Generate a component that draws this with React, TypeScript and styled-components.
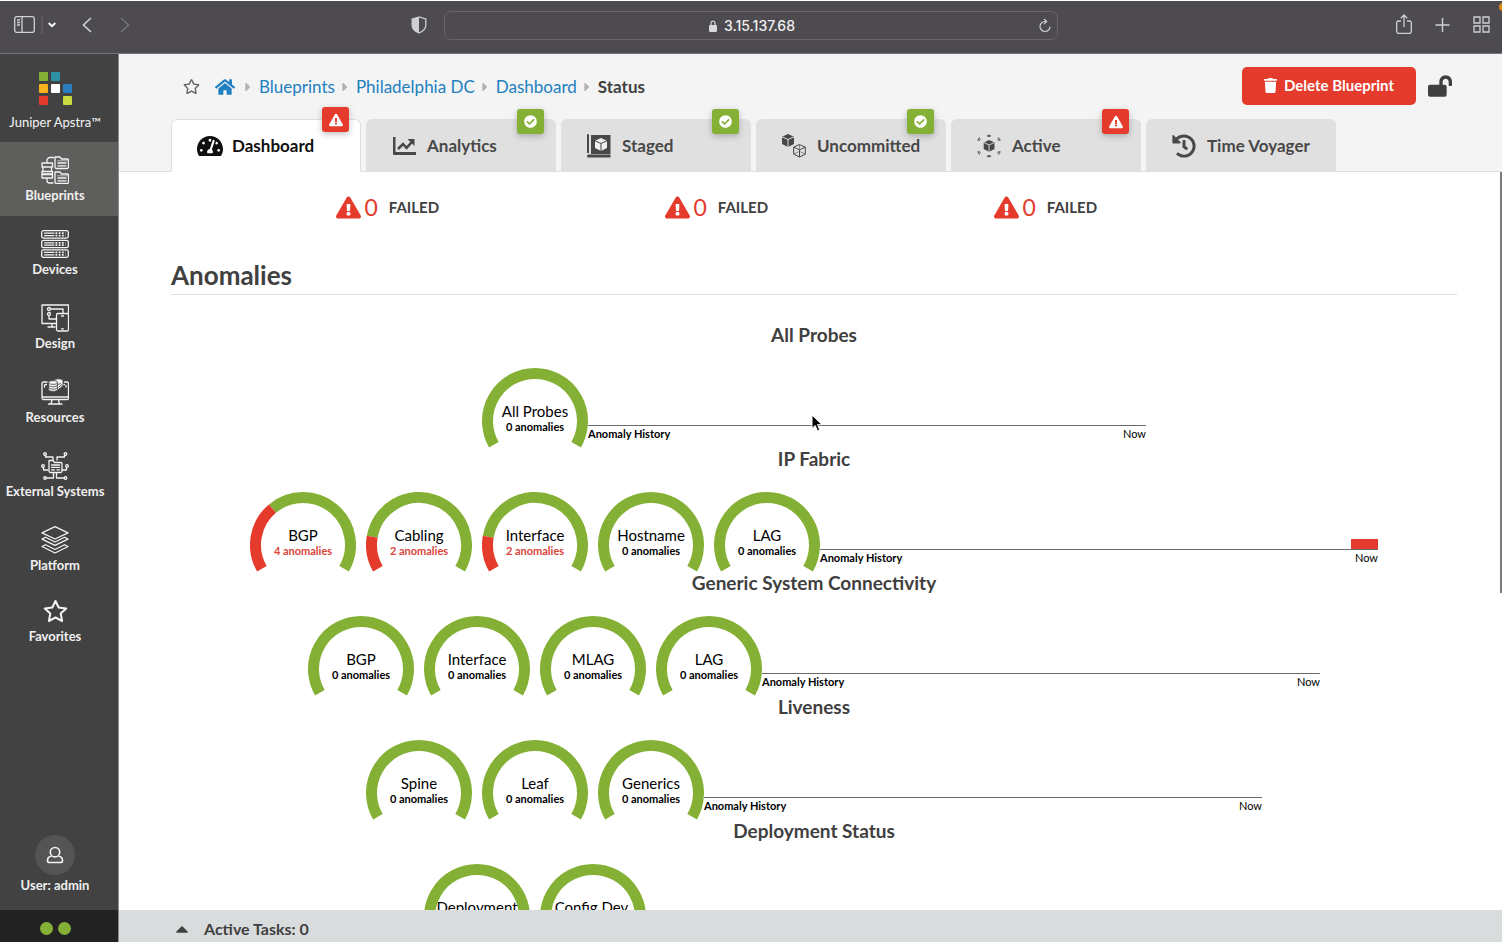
import React from 'react';
import styled, { createGlobalStyle } from 'styled-components';
import {
  FaCaretRight,
  FaCaretUp,
  FaCheckCircle,
  FaExclamationTriangle,
  FaHistory,
  FaHome,
  FaLockOpen,
  FaRegStar,
  FaTachometerAlt,
  FaTrash,
} from 'react-icons/fa';

const GREEN = '#84b135';
const RED = '#e53b2c';

const GlobalStyle = createGlobalStyle`
  * { box-sizing: border-box; }
  body {
    margin: 0;
    font-family: Lato, "Liberation Sans", sans-serif;
    color: #404040;
    background: #fff;
  }
  h1, h2, h3, ul, ol, p { margin: 0; padding: 0; }
  ul, ol { list-style: none; }
  a { text-decoration: none; }
  button, input { font-family: inherit; }
  svg { display: block; flex: none; }
`;

const Window = styled.div`
  display: flex;
  flex-direction: column;
  height: 100vh;
  overflow: hidden;
`;

/* ---------- browser toolbar ---------- */

const Toolbar = styled.header`
  position: relative;
  flex: none;
  display: grid;
  grid-template-columns: 1fr 614px 1fr;
  align-items: center;
  height: 54px;
  padding-bottom: 3px;
  background: #4d4b50;
  border-top: 1px solid #fff;
  border-bottom: 1px solid #767578;
  overflow: hidden;
`;

const ToolGroup = styled.div`
  display: flex;
  align-items: center;
  padding-bottom: 2px;
`;

const LeftTools = styled(ToolGroup)`
  padding-left: 14px;
  padding-right: 17px;
`;

const RightTools = styled(ToolGroup)`
  justify-content: flex-end;
  gap: 23px;
  padding-right: 12px;
`;

const ToolButton = styled.button<{ $push?: number }>`
  display: flex;
  padding: 0;
  margin-left: ${(p) => p.$push ?? 0}px;
  border: 0;
  background: none;
  color: #d0cfd3;
  &:disabled { color: #737176; }
`;

const Divider = styled.span`
  width: 2px;
  height: 19px;
  margin-left: 6px;
  background: #5b595e;
`;

const ShieldButton = styled(ToolButton)`
  margin-left: auto;
`;

const AddressBar = styled.div`
  display: flex;
  align-items: center;
  height: 29px;
  padding: 0 6px 0 20px;
  border: 1px solid #67656a;
  border-radius: 7px;
`;

const Address = styled.span`
  flex: 1;
  display: flex;
  align-items: center;
  justify-content: center;
  gap: 7px;
  font: 500 14px/20px Inter, sans-serif;
  color: #f0eff1;
`;

const RecordingDot = styled.span`
  position: absolute;
  top: 2px;
  right: -5px;
  width: 8px;
  height: 8px;
  border-radius: 50%;
  background: #d98a1c;
`;

/* ---------- sidebar ---------- */

const Shell = styled.div`
  flex: 1;
  min-height: 0;
  display: flex;
`;

const Sidebar = styled.aside`
  flex: none;
  width: 119px;
  display: flex;
  flex-direction: column;
  background: #424242;
  border-right: 1px solid #8c8c8c;
`;

const Brand = styled.a`
  height: 88px;
  padding-top: 18px;
  padding-right: 8px;
  display: flex;
  flex-direction: column;
  align-items: center;
  gap: 8px;
  font-size: 13px;
  line-height: 18px;
  color: #f4f4f4;
  white-space: nowrap;
`;

const NavLink = styled.a<{ $active?: boolean }>`
  display: flex;
  flex-direction: column;
  align-items: center;
  gap: 2px;
  height: 74px;
  padding: 14px 8px 0 0;
  font-size: 13px;
  font-weight: 700;
  line-height: 18px;
  color: #f0f0f0;
  white-space: nowrap;
  background: ${(p) => (p.$active ? '#5e5e5c' : 'transparent')};
`;

const UserLink = styled.a`
  display: flex;
  flex-direction: column;
  align-items: center;
  gap: 1px;
  margin-top: auto;
  padding: 0 8px 16px 0;
  font-size: 13px;
  font-weight: 700;
  line-height: 18px;
  color: #f0f0f0;
`;

const Avatar = styled.span`
  display: grid;
  place-items: center;
  width: 40px;
  height: 40px;
  border-radius: 50%;
  background: #545454;
`;

const StatusLights = styled.div`
  display: flex;
  align-items: center;
  justify-content: center;
  gap: 5px;
  height: 32px;
  padding: 5px 8px 0 0;
  background: #222;
`;

const Light = styled.span`
  width: 13px;
  height: 13px;
  border-radius: 50%;
  background: ${GREEN};
`;

/* ---------- page header ---------- */

const Page = styled.div`
  flex: 1;
  min-width: 0;
  display: flex;
  flex-direction: column;
`;

const PageHeader = styled.div`
  flex: none;
  padding: 13px 45px 0 52px;
  background: #f4f4f4;
  border-bottom: 1px solid #dededf;
`;

const TitleRow = styled.div`
  display: flex;
  align-items: center;
  height: 38px;
  padding-left: 12px;
`;

const Crumbs = styled.ol`
  display: flex;
  align-items: center;
  padding-top: 2px;
  font-size: 17px;
  line-height: 24px;
`;

const Crumb = styled.li`
  display: flex;
  align-items: center;
  a { color: #2180c0; }
  strong { font-weight: 700; }
  &:first-child { padding-right: 3px; }
`;

const StarButton = styled.button`
  display: flex;
  padding: 0;
  margin-right: 15px;
  border: 0;
  background: none;
  color: #666;
`;

const CrumbCaret = styled(FaCaretRight)`
  margin: 0 4px 0 3px;
  color: #b0b0b0;
`;

const DeleteButton = styled.button`
  display: flex;
  align-items: center;
  gap: 6px;
  height: 38px;
  margin-left: auto;
  padding: 0 22px 2px 21px;
  border: 0;
  border-radius: 5px;
  background: ${RED};
  color: #fff;
  font-size: 15px;
  font-weight: 700;
`;

const LockButton = styled.button`
  display: flex;
  padding: 0;
  margin: 0 5px 0 12px;
  border: 0;
  background: none;
  color: #404040;
`;

const Tabs = styled.nav`
  display: flex;
  gap: 5px;
  margin: 14px 0 -1px;
`;

const Tab = styled.a<{ $active?: boolean }>`
  position: relative;
  display: flex;
  align-items: center;
  gap: 10px;
  width: 190px;
  height: 53px;
  padding: 1px 0 0 25px;
  border: 1px solid ${(p) => (p.$active ? '#dededf' : '#e0e0e0')};
  border-bottom-color: ${(p) => (p.$active ? '#fff' : '#dededf')};
  border-radius: 6px 6px 0 0;
  background: ${(p) => (p.$active ? '#fff' : '#e0e0e0')};
  color: ${(p) => (p.$active ? '#101010' : '#484848')};
  font-size: 17px;
  font-weight: 700;
  line-height: 24px;
`;

const TabIcon = styled.span`
  width: 25px;
`;

const Badge = styled.span<{ $bad?: boolean; $raised?: boolean }>`
  position: absolute;
  top: ${(p) => (p.$raised ? -13 : -11)}px;
  right: 11px;
  display: grid;
  place-items: center;
  width: 27px;
  height: 25px;
  border-radius: 3px;
  background: ${(p) => (p.$bad ? RED : GREEN)};
  color: #fff;
  box-shadow: 0 2px 6px rgba(0, 0, 0, 0.25);
`;

/* ---------- content ---------- */

const Content = styled.main`
  position: relative;
  flex: 1;
  min-height: 0;
  overflow: hidden;
  padding: 19px 45px 0 52px;
`;

const ScrollThumb = styled.span`
  position: absolute;
  top: 0;
  right: 0;
  width: 2px;
  height: 57%;
  background: #7d7d7d;
`;

const StatRow = styled.ul`
  display: flex;
  justify-content: center;
  margin: 0 -15px;
`;

const Stat = styled.li`
  flex: 0 0 25%;
  display: flex;
  align-items: center;
  padding: 0 15px;
  height: 32px;
  font-size: 15px;
  font-weight: 700;
  svg, b { color: ${RED}; }
  b {
    margin: 0 11px 0 4px;
    font-size: 23px;
    font-weight: 400;
  }
`;

const SectionTitle = styled.h2`
  margin-top: 36px;
  padding-bottom: 3px;
  border-bottom: 1px solid #dedede;
  font-size: 26px;
  line-height: 32px;
`;

const Groups = styled.div`
  padding-top: 28px;
`;

const Group = styled.section`
  display: flex;
  flex-direction: column;
  align-items: center;
  height: 124px;
`;

const GroupTitle = styled.h3`
  margin-bottom: 21px;
  font-size: 19px;
  line-height: 24px;
`;

const GaugeRow = styled.div`
  display: flex;
`;

const GaugeBox = styled.div`
  position: relative;
  width: 106px;
  height: 80px;
  & + & { margin-left: 10px; }
`;

const GaugeLabel = styled.div<{ $bad?: boolean }>`
  position: absolute;
  inset: 34px 0 auto;
  text-align: center;
  font-size: 15px;
  line-height: 18px;
  color: #000;
  white-space: nowrap;
  strong {
    display: block;
    font-size: 11px;
    line-height: 14px;
    color: ${(p) => (p.$bad ? '#d9453a' : '#000')};
  }
`;

const History = styled.div`
  width: 558px;
  padding-top: 47px;
  font-size: 11px;
  line-height: 16px;
  color: #000;
`;

const HistoryPlot = styled.div`
  display: flex;
  justify-content: flex-end;
  align-items: flex-end;
  height: 11px;
  border-bottom: 1px solid #6a6a6a;
`;

const HistoryBar = styled.span`
  width: 27px;
  height: 10px;
  background: ${RED};
`;

const HistoryAxis = styled.div`
  display: flex;
  justify-content: space-between;
`;

const Pointer = styled.svg`
  position: absolute;
  top: 242px;
  left: 50%;
`;

const TaskBar = styled.footer`
  flex: none;
  display: flex;
  align-items: center;
  gap: 12px;
  height: 32px;
  padding: 5px 0 0 53px;
  background: #d9dcdd;
  font-size: 16px;
  font-weight: 700;
  line-height: 22px;
`;

/* ---------- drawings ---------- */

const LineIcon = ({ children, width = 1.3 }: { children: React.ReactNode; width?: number }) => (
  <svg width="28" height="28" viewBox="0 0 28 28" fill="none" stroke="#f4f4f4"
    strokeWidth={width} strokeLinejoin="round" strokeLinecap="round" aria-hidden="true">
    {children}
  </svg>
);

const BlueprintsIcon = () => (
  <LineIcon>
    <path d="M1 7h10.500v4H1zM2 11h8.500v4.500H2zM1 15.500h10.500v2.500H2M1 18.500h10.500v3.500H1zM1 15.500v2.500" />
    <path d="M6 6.500V4.500a3 3 0 0 1 3-3h3.500M6 22.500v2a2.500 2.500 0 0 0 2.500 2.500H12" />
    <path d="M14 1h5l1.500 2H26a1.500 1.500 0 0 1 1.500 1.500V11A1.500 1.500 0 0 1 26 12.500H15.500A1.500 1.500 0 0 1 14 11zM17 7h8M17 9.800h8" />
    <path d="M14 16h5l1.500 2H26a1.500 1.500 0 0 1 1.500 1.500V26a1.500 1.500 0 0 1-1.500 1.500H15.500A1.500 1.500 0 0 1 14 26zM17 22h8M17 24.800h8" />
    <path d="M16.500 4.800h10M16.500 19.800h10" strokeWidth=".6" />
  </LineIcon>
);

const DevicesIcon = () => (
  <LineIcon>
    {[0.7, 10.3, 19.9].map((y) => (
      <g key={y}>
        <rect x=".7" y={y} width="26.600" height="7.400" rx="1.800" />
        <path d={`M3.500 ${y + 2.500}h9.500M3.500 ${y + 4.900}h9.500`} strokeWidth="1.200" />
        <path d={`M14.500 ${y + 2.500}h10M14.500 ${y + 4.900}h10`} strokeWidth="1.800" strokeDasharray="1.800 1.400" strokeLinecap="butt" />
      </g>
    ))}
  </LineIcon>
);

const DesignIcon = () => (
  <LineIcon>
    <path d="M15 19.500H1V1h26.500v9M11 19.500v3M7 23h7" />
    <circle cx="8" cy="5" r="1.500" />
    <circle cx="8" cy="10" r="1.500" />
    <path d="M9.500 5H22v4.500M8 11.500V15h7.500" />
    <rect x="15.500" y="9.500" width="12" height="17.500" rx="1.500" />
    <path d="M20.500 12h2M20.500 24.800h2" />
  </LineIcon>
);

const ResourcesIcon = () => (
  <LineIcon>
    <path d="M6 4H2.500A1.500 1.500 0 0 0 1 5.500V20a1.500 1.500 0 0 0 1.500 1.500h23A1.500 1.500 0 0 0 27.500 20V5.500A1.500 1.500 0 0 0 26 4h-2.500M1 19h26.500M11 22l-1 4M17.500 22l1 4M7.500 26h13.500" />
    <path d="M3.500 9V7.500A1 1 0 0 1 4.500 6.500h1M25 9V7.500M22 6.500h1.500" />
    <g fill="#f4f4f4" stroke="#424242" strokeWidth=".8">
      <path d="M13 3c0-3 9-3 9 0v4c-1 3-4 3-5 5h-4z" />
      <path d="M7.500 4.500v7c0 2.500 9 2.500 9 0v-7z" />
      <ellipse cx="12" cy="4.500" rx="4.500" ry="1.900" />
      <path d="M7.500 7.200c0 2.300 9 2.300 9 0M7.500 9.600c0 2.300 9 2.300 9 0M17 6.500l2.500-1M18 9l2.500-2.500" fill="none" />
    </g>
  </LineIcon>
);

const ExternalIcon = () => (
  <LineIcon>
    <path d="M8 8.500h4l1.500 2H20a1 1 0 0 1 1 1V19a1.500 1.500 0 0 1-1.500 1.500h-10A1.500 1.500 0 0 1 8 19zM10.500 13h8M10.500 15.300h8M10.500 17.800h3M16 17.800h2.500" />
    <path d="M4.500 3v2H12v3M23.500 3v2H16v3M2.500 15.500V18H7M25.500 15.500V18H21M12.500 21v5H5M15.500 21v5H23" />
    <circle cx="4" cy="2" r="1.300" />
    <circle cx="24.500" cy="2" r="1.300" />
    <circle cx="2" cy="14" r="1.300" />
    <circle cx="26" cy="14" r="1.300" />
    <circle cx="4" cy="26" r="1.300" />
    <circle cx="24.500" cy="26" r="1.300" />
  </LineIcon>
);

const PlatformIcon = () => (
  <LineIcon width={1.2}>
    <path d="M14 .6 27 6.900 14 13 1 6.900z" />
    <path d="M4.500 11.300 1 13.100 14 19.400l13-6.300-3.500-1.800M4.500 11.300 14 16l9.500-4.700" />
    <path d="M4.500 18.700 1 20.500l13 6.500 13-6.500-3.500-1.800M4.500 18.700 14 23.500l9.500-4.800" />
  </LineIcon>
);

const FavoritesIcon = () => (
  <svg width="25" height="25" viewBox="1.500 3.500 25 25" fill="none" stroke="#f4f4f4"
    strokeWidth="2" strokeLinejoin="round" aria-hidden="true">
    <path d="m14 4.500 3.200 6.500 7.500 1-5.500 5 1.400 7.500L14 21l-6.600 3.500L8.800 17l-5.500-5 7.500-1z" />
  </svg>
);

const UserIcon = () => (
  <svg width="18" height="18" viewBox="0 0 18 18" fill="none" stroke="#f4f4f4" strokeWidth="1.600" aria-hidden="true">
    <circle cx="9" cy="6.200" r="4.700" />
    <path d="M5.500 10.200c-2.500.300-4 1.900-4 4.200 0 1.300.7 2.100 2 2.100h11c1.300 0 2-.8 2-2.100 0-2.300-1.500-3.900-4-4.200" />
  </svg>
);

const BrandMark = () => (
  <svg width="33" height="33" viewBox="0 0 33 33" aria-hidden="true">
    <rect x="0" y="0" width="9" height="9" rx="1" fill="#84b135" />
    <rect x="12" y="0" width="9" height="9" rx="1" fill="#2b93a5" />
    <rect x="0" y="12" width="9" height="9" rx="1" fill="#fbb31c" />
    <rect x="12" y="12" width="9" height="9" rx="1" fill="#fff" />
    <rect x="24" y="12" width="9" height="9" rx="1" fill="#2a7dc0" />
    <rect x="0" y="24" width="9" height="9" rx="1" fill="#e53b2c" />
    <rect x="24" y="24" width="9" height="9" rx="1" fill="#cbdb3f" />
  </svg>
);

const AnalyticsIcon = () => (
  <svg width="25" height="18" viewBox="0 0 25 18" aria-hidden="true">
    <path d="M1 0h2.500v15H24v3H2a1 1 0 0 1-1-1zM15.500 2H22.500v7z" fill="#484848" />
    <path d="m6 12 5-5 3.500 3.800 5.500-6" fill="none" stroke="#484848" strokeWidth="2.500" />
  </svg>
);

const Cube = ({ x, y, s, fill, line }: { x: number; y: number; s: number; fill: string; line: string }) => (
  <g transform={`translate(${x} ${y}) scale(${s})`}>
    <path d="M6 0 12 2.800V10L6 13 0 10V2.800z" fill={fill} />
    <path d="M0 2.800 6 5.500l6-2.700M6 5.500V13" fill="none" stroke={line} />
  </g>
);

const StagedIcon = () => (
  <svg width="24" height="24" viewBox="0 0 24 24" aria-hidden="true">
    <path d="M0 1a1 1 0 0 1 2 0v18H0zM4 1h19.500v19H4zM0 21.500 1 20.500h22.500V23.500H1.500A1.500 1.500 0 0 1 0 22z" fill="#484848" />
    <Cube x={8} y={4} s={1} fill="#f0f0f0" line="#484848" />
  </svg>
);

const UncommittedIcon = () => (
  <svg width="24" height="24" viewBox="0 0 24 24" aria-hidden="true">
    <Cube x={0} y={0} s={1} fill="#484848" line="#e0e0e0" />
    <g fill="none" stroke="#484848" strokeLinejoin="round">
      <path d="M17.500 10.500 23.300 13.200v7L17.500 23l-5.800-2.800v-7zM11.700 13.200l5.800 2.600 5.800-2.600M17.500 15.800V23" />
      <path d="M17.500 10.500v5M11.700 20.200l5-2.500M23.300 20.200l-5-2.500" strokeWidth=".6" />
    </g>
  </svg>
);

const ActiveIcon = () => (
  <svg width="24" height="24" viewBox="0 0 24 24" aria-hidden="true">
    <Cube x={6.700} y={6} s={0.900} fill="#484848" line="#e0e0e0" />
    <g fill="none" stroke="#484848" strokeWidth="1">
      <path d="M10 2q2-2 4 0M10 22q2 2 4 0M10.500 2.300h3M10.500 21.700h3" />
      <path d="M1 6.800q-.300-2.500 2-3.300M2 6.800l1.500-2M23 6.800q.300-2.500-2-3.300M22 6.800l-1.500-2" />
      <path d="M1 17.200q-.300 2.500 2 3.300M2 17.200l1.500 2M23 17.200q.300 2.500-2 3.300M22 17.200l-1.500 2" />
    </g>
  </svg>
);

const polar = (deg: number, r = 47.5) => {
  const a = (deg * Math.PI) / 180;
  return `${53 + r * Math.cos(a)} ${53 + r * Math.sin(a)}`;
};

const arc = (from: number, to: number) =>
  `M${polar(from)}A47.5 47.5 0 ${to - from > 180 ? 1 : 0} 1 ${polar(to)}`;

/* A 240 degree dial on a scale of twelve anomalies. */
const Gauge = ({ name, count }: { name: string; count: number }) => {
  const split = 150 + count * 20;
  return (
    <GaugeBox>
      <svg width="106" height="80" viewBox="0 0 106 80" fill="none" strokeWidth="11" aria-hidden="true">
        <path d={arc(split, 390)} stroke={GREEN} />
        {count > 0 && <path d={arc(150, split)} stroke={RED} />}
      </svg>
      <GaugeLabel $bad={count > 0}>
        {name}
        <strong>{count} anomalies</strong>
      </GaugeLabel>
    </GaugeBox>
  );
};

/* ---------- data ---------- */

const navItems = [
  { label: 'Blueprints', icon: <BlueprintsIcon />, active: true },
  { label: 'Devices', icon: <DevicesIcon /> },
  { label: 'Design', icon: <DesignIcon /> },
  { label: 'Resources', icon: <ResourcesIcon /> },
  { label: 'External Systems', icon: <ExternalIcon /> },
  { label: 'Platform', icon: <PlatformIcon /> },
  { label: 'Favorites', icon: <FavoritesIcon /> },
];

const tabs = [
  { label: 'Dashboard', icon: <FaTachometerAlt size={26} />, state: 'bad', active: true },
  { label: 'Analytics', icon: <AnalyticsIcon />, state: 'good' },
  { label: 'Staged', icon: <StagedIcon />, state: 'good' },
  { label: 'Uncommitted', icon: <UncommittedIcon />, state: 'good' },
  { label: 'Active', icon: <ActiveIcon />, state: 'bad' },
  { label: 'Time Voyager', icon: <FaHistory size={24} /> },
];

const groups: { title: string; gauges: [string, number][]; recent?: boolean }[] = [
  { title: 'All Probes', gauges: [['All Probes', 0]] },
  {
    title: 'IP Fabric',
    gauges: [['BGP', 4], ['Cabling', 2], ['Interface', 2], ['Hostname', 0], ['LAG', 0]],
    recent: true,
  },
  { title: 'Generic System Connectivity', gauges: [['BGP', 0], ['Interface', 0], ['MLAG', 0], ['LAG', 0]] },
  { title: 'Liveness', gauges: [['Spine', 0], ['Leaf', 0], ['Generics', 0]] },
  { title: 'Deployment Status', gauges: [['Deployment', 0], ['Config Dev.', 0]] },
];

export default function App() {
  return (
    <Window>
      <GlobalStyle />
      <Toolbar>
        <LeftTools>
          <ToolButton aria-label="Show sidebar">
            <svg width="21" height="17" viewBox="0 0 21 17" fill="none" stroke="currentColor" strokeWidth="1.300">
              <rect x=".7" y=".7" width="19.600" height="15.600" rx="2" />
              <path d="M8 1v15M3 4h3M3 6.500h3M3 9h3" />
            </svg>
          </ToolButton>
          <Divider />
          <ToolButton aria-label="Tab groups" $push={5}>
            <svg width="8" height="6" viewBox="0 0 8 6" fill="none" stroke="#fff" strokeWidth="1.800">
              <path d="m.7 1 3.300 3.200L7.300 1" />
            </svg>
          </ToolButton>
          <ToolButton aria-label="Back" $push={26}>
            <svg width="10" height="16" viewBox="0 0 10 16" fill="none" stroke="currentColor" strokeWidth="1.700">
              <path d="M9 1 1.500 8 9 15" />
            </svg>
          </ToolButton>
          <ToolButton aria-label="Forward" $push={28} disabled>
            <svg width="10" height="16" viewBox="0 0 10 16" fill="none" stroke="currentColor" strokeWidth="1.700">
              <path d="m1 1 7.500 7L1 15" />
            </svg>
          </ToolButton>
          <ShieldButton aria-label="Privacy report">
            <svg width="16" height="18" viewBox="0 0 16 18">
              <path d="M8 1 1.200 3v6.500c0 3.500 3 5.800 6.800 7.500 3.800-1.700 6.800-4 6.800-7.500V3z" fill="none" stroke="currentColor" strokeWidth="1.300" />
              <path d="M8 1 1.200 3v6.500c0 3.500 3 5.800 6.800 7.500z" fill="currentColor" />
            </svg>
          </ShieldButton>
        </LeftTools>
        <AddressBar>
          <Address>
            <svg width="8" height="12" viewBox="0 0 8 12">
              <path d="M2 5.500V3.200a2 2 0 0 1 4 0v2.300" fill="none" stroke="#d8d7da" strokeWidth="1.200" />
              <rect x="0" y="5" width="8" height="7" rx="1.200" fill="#d8d7da" />
            </svg>
            3.15.137.68
          </Address>
          <ToolButton aria-label="Reload">
            <svg width="12" height="15" viewBox="0 0 12 15" fill="none" stroke="currentColor" strokeWidth="1.200">
              <path d="M7 3.500H6a5 5 0 1 0 5 5M5 .8l2.700 2.700L5 6.200" />
            </svg>
          </ToolButton>
        </AddressBar>
        <RightTools>
          <ToolButton aria-label="Share">
            <svg width="16" height="21" viewBox="0 0 16 21" fill="none" stroke="currentColor" strokeWidth="1.300">
              <path d="M5 7H2.500A1.800 1.800 0 0 0 .7 8.800v8.700a1.800 1.800 0 0 0 1.800 1.800h11a1.800 1.800 0 0 0 1.800-1.800V8.800A1.800 1.800 0 0 0 13.500 7H11M8 13V1.200M4.800 4.200 8 1l3.200 3.200" />
            </svg>
          </ToolButton>
          <ToolButton aria-label="New tab">
            <svg width="15" height="16" viewBox="0 0 15 16" fill="none" stroke="currentColor" strokeWidth="1.400">
              <path d="M7.500 1v14M.5 8h14" />
            </svg>
          </ToolButton>
          <ToolButton aria-label="Tab overview">
            <svg width="17" height="17" viewBox="0 0 17 17" fill="none" stroke="currentColor" strokeWidth="1.300">
              <path d="M1 1h6v6H1zM10 1h6v6h-6zM1 10h6v6H1zM10 10h6v6h-6z" />
            </svg>
          </ToolButton>
        </RightTools>
        <RecordingDot />
      </Toolbar>

      <Shell>
        <Sidebar>
          <Brand href="#home">
            <BrandMark />
            Juniper Apstra™
          </Brand>
          <nav>
            {navItems.map((item) => (
              <NavLink key={item.label} href="#nav" $active={item.active}>
                {item.icon}
                {item.label}
              </NavLink>
            ))}
          </nav>
          <UserLink href="#user">
            <Avatar>
              <UserIcon />
            </Avatar>
            User: admin
          </UserLink>
          <StatusLights>
            <Light />
            <Light />
          </StatusLights>
        </Sidebar>

        <Page>
          <PageHeader>
            <TitleRow>
              <StarButton aria-label="Add to favorites">
                <FaRegStar size={17} />
              </StarButton>
              <Crumbs>
                <Crumb>
                  <a href="#home" aria-label="Home">
                    <FaHome size={20} />
                  </a>
                </Crumb>
                {['Blueprints', 'Philadelphia DC', 'Dashboard'].map((name) => (
                  <Crumb key={name}>
                    <CrumbCaret size={14} />
                    <a href="#crumb">{name}</a>
                  </Crumb>
                ))}
                <Crumb>
                  <CrumbCaret size={14} />
                  <strong>Status</strong>
                </Crumb>
              </Crumbs>
              <DeleteButton>
                <FaTrash size={15} />
                Delete Blueprint
              </DeleteButton>
              <LockButton aria-label="Unlocked">
                <FaLockOpen size={24} />
              </LockButton>
            </TitleRow>
            <Tabs>
              {tabs.map((tab) => (
                <Tab key={tab.label} href="#tab" $active={tab.active}>
                  <TabIcon>{tab.icon}</TabIcon>
                  {tab.label}
                  {tab.state && (
                    <Badge $bad={tab.state === 'bad'} $raised={tab.active}>
                      {tab.state === 'bad' ? <FaExclamationTriangle size={14} /> : <FaCheckCircle size={13} />}
                    </Badge>
                  )}
                </Tab>
              ))}
            </Tabs>
          </PageHeader>

          <Content>
            <StatRow>
              {[1, 2, 3].map((n) => (
                <Stat key={n}>
                  <FaExclamationTriangle size={25} />
                  <b>0</b>
                  FAILED
                </Stat>
              ))}
            </StatRow>
            <SectionTitle>Anomalies</SectionTitle>
            <Groups>
              {groups.map((group) => (
                <Group key={group.title}>
                  <GroupTitle>{group.title}</GroupTitle>
                  <GaugeRow>
                    {group.gauges.map(([name, count]) => (
                      <Gauge key={name} name={name} count={count} />
                    ))}
                    <History>
                      <HistoryPlot>{group.recent && <HistoryBar />}</HistoryPlot>
                      <HistoryAxis>
                        <strong>Anomaly History</strong>
                        <span>Now</span>
                      </HistoryAxis>
                    </History>
                  </GaugeRow>
                </Group>
              ))}
            </Groups>
            <ScrollThumb />
            <Pointer width="12" height="18" viewBox="0 0 12 18" aria-hidden="true">
              <path d="M1 1v13.500l3.200-3 2.200 5.300 2.300-1-2.200-5.100H11z" fill="#000" stroke="#fff" />
            </Pointer>
          </Content>

          <TaskBar>
            <FaCaretUp size={20} />
            Active Tasks: 0
          </TaskBar>
        </Page>
      </Shell>
    </Window>
  );
}
